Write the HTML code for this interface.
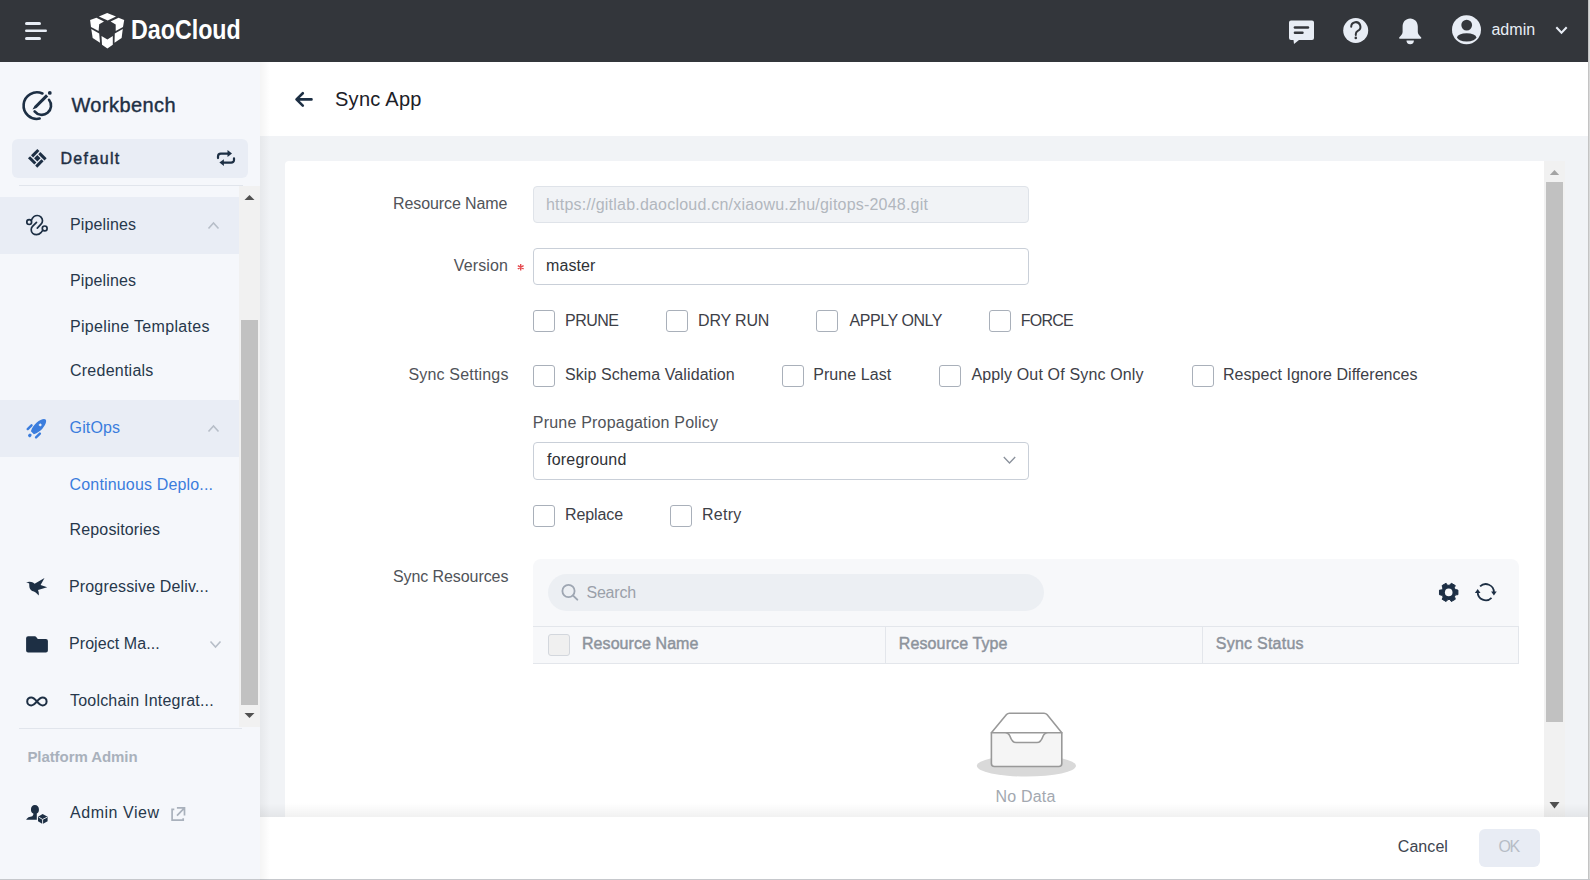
<!DOCTYPE html>
<html><head><meta charset="utf-8">
<style>
*{margin:0;padding:0;box-sizing:border-box}
html,body{width:1590px;height:880px;overflow:hidden;background:#f1f3f6;font-family:"Liberation Sans",sans-serif}
.a{position:absolute}
.t{position:absolute;white-space:nowrap;line-height:1}
.hdr{left:0;top:0;width:1588px;height:62px;background:#33363b}
.side{left:0;top:62px;width:260px;height:818px;background:#f5f7fb}
.grp{left:0;width:239px;height:57px;background:#e9edf5}
.sep{height:1px;background:#e1e5ec}
.cb{position:absolute;width:22px;height:22px;border:1px solid #a9b0ba;border-radius:3px;background:#fff}
.ic{position:absolute;overflow:visible}
</style></head><body>
<!-- header -->
<div class="a hdr"></div>
<svg class="ic" style="left:0;top:0" width="60" height="62">
 <rect x="25" y="22" width="16" height="3" rx="1.5" fill="#e8edf5"/>
 <rect x="25" y="29.5" width="22" height="2.4" rx="1.2" fill="#e8edf5"/>
 <rect x="25" y="37" width="16" height="3" rx="1.5" fill="#e8edf5"/>
</svg>
<svg class="ic" style="left:85px;top:5px" width="50" height="50" viewBox="0 0 50 50">
 <g fill="#ffffff">
 <polygon points="13.9,11.6 22.2,8 31,11.6 22.7,15.6"/>
 <polygon points="5.1,15.1 11.4,12.8 19,16.5 14.2,19.3 13.6,25.9 6,21.9"/>
 <polygon points="25.6,16.5 33.5,12.8 39.2,15.1 38,21.9 30.7,25.9 30.7,19.6"/>
 <polygon points="6.25,24.1 14.2,28.4 15,37.8 7.7,33"/>
 <polygon points="37.8,24.1 29.8,28.4 29.5,37.8 36.6,33"/>
 <polygon points="16.5,31 22.4,34.4 27.8,31 27.8,39.8 22.4,43.5 17,39.8"/>
 </g>
</svg>
<!-- header right icons -->
<svg class="ic" style="left:1280px;top:10px" width="160" height="40" viewBox="0 0 160 40">
 <path d="M11,10.4 H32 a2,2 0 0 1 2,2 V28 a2,2 0 0 1 -2,2 H19 L14,34 L13.5,30 H11 a2,2 0 0 1 -2,-2 V12.4 a2,2 0 0 1 2,-2z" fill="#e8edf5"/>
 <rect x="13.7" y="16.3" width="15.5" height="2.4" rx="1.2" fill="#33363b"/>
 <rect x="13.7" y="21.6" width="10" height="2.4" rx="1.2" fill="#33363b"/>
 <circle cx="75.7" cy="20.5" r="12.5" fill="#e8edf5"/>
 <path d="M71.2,16.8 a4.6,4.6 0 1 1 6.6,4.1 c-1.4,0.8 -2,1.6 -2,3.2 v0.8" stroke="#33363b" stroke-width="2" fill="none" stroke-linecap="round"/>
 <circle cx="75.8" cy="27.9" r="1.3" fill="#33363b"/>
 <path d="M130.2,8.5 c-4.6,0 -7.6,3.6 -7.6,8.2 v5 c0,2 -1.2,3.4 -3.2,5.6 c-0.6,0.6 -0.4,1.5 0.6,1.5 h20.4 c1,0 1.2,-0.9 0.6,-1.5 c-2,-2.2 -3.2,-3.6 -3.2,-5.6 v-5 c0,-4.6 -3,-8.2 -7.6,-8.2z" fill="#e8edf5"/>
 <path d="M126.5,30.5 h7.4 a3.7,3.7 0 0 1 -7.4,0z" fill="#e8edf5"/>
</svg>
<svg class="ic" style="left:1445px;top:10px" width="130" height="40" viewBox="0 0 130 40">
 <circle cx="21.5" cy="19.7" r="14.5" fill="#e8edf5"/>
 <circle cx="21.7" cy="15.1" r="5.4" fill="#33363b"/>
 <ellipse cx="21.7" cy="27.3" rx="9.6" ry="4.1" fill="#33363b"/>
 <path d="M111.3,17.3 L116.5,22.8 L121.7,17.3" stroke="#e8edf5" stroke-width="2" fill="none"/>
</svg>

<!-- sidebar -->
<div class="a side"></div>
<svg class="ic" style="left:18px;top:86px" width="40" height="40" viewBox="0 0 40 40">
 <path d="M24.45,7.5 A13.3,13.3 0 1 0 21.66,32.6" stroke="#1d2f44" stroke-width="2.6" fill="none" stroke-linecap="round"/>
 <path d="M31,13.8 A9,9 0 0 1 16.6,25.4" stroke="#1d2f44" stroke-width="2.6" fill="none" stroke-linecap="round"/>
 <polygon points="14.5,23.6 16.4,19.9 28.0,8.3 30.2,10.5 18.6,22.1" fill="#1d2f44"/>
 <circle cx="31.8" cy="6.9" r="1.9" fill="#1d2f44"/>
</svg>
<div class="a" style="left:12px;top:139px;width:236px;height:38.5px;border-radius:6px;background:#e9edf5"></div>
<svg class="ic" style="left:22px;top:143px" width="30" height="30" viewBox="0 0 30 30">
 <g transform="translate(15.3,15.3) scale(-1,1) rotate(45) translate(-6.6,-6.6)" fill="#1d2f44">
  <rect x="0" y="0" width="8.9" height="3"/>
  <rect x="10.2" y="0" width="3" height="8.9"/>
  <rect x="4.3" y="10.2" width="8.9" height="3"/>
  <rect x="0" y="4.3" width="3" height="8.9"/>
  <rect x="4.3" y="4.3" width="4.6" height="4.6"/>
 </g>
</svg>
<svg class="ic" style="left:205px;top:140px" width="50" height="35" viewBox="0 0 50 35">
 <path d="M13,18.1 V16.5 a2.8,2.8 0 0 1 2.8,-2.8 H23" stroke="#1d2f44" stroke-width="2.2" fill="none" stroke-linecap="round"/>
 <polygon points="22.5,10.1 27,13.6 22.5,17" fill="#1d2f44"/>
 <path d="M29,18.3 V19.9 a2.8,2.8 0 0 1 -2.8,2.8 H18.7" stroke="#1d2f44" stroke-width="2.2" fill="none" stroke-linecap="round"/>
 <polygon points="18.9,19.3 14.4,22.6 18.9,25.9" fill="#1d2f44"/>
</svg>
<div class="a sep" style="left:19px;top:185px;width:224px"></div>
<!-- sidebar scroll track -->
<div class="a" style="left:239px;top:186px;width:21px;height:541px;background:#f1f1f1"></div>
<div class="a" style="left:241px;top:320px;width:17px;height:385px;background:#c1c1c1"></div>
<svg class="ic" style="left:239px;top:186px" width="21" height="541">
 <polygon points="5.5,14 10.5,9 15.5,14" fill="#505050"/>
 <polygon points="5.5,527 10.5,532 15.5,527" fill="#505050"/>
</svg>
<div class="a grp" style="top:197px"></div>
<div class="a grp" style="top:400px"></div>
<!-- pipelines icon -->
<svg class="ic" style="left:22px;top:210px" width="30" height="30" viewBox="0 0 30 30">
 <g stroke="#1d2f44" stroke-width="1.7" fill="none" stroke-linecap="round">
 <circle cx="7.2" cy="12.1" r="2.4"/>
 <circle cx="22.7" cy="18.4" r="2.4"/>
 <path d="M9.3,10.3 C10.5,7.5 12.5,5.5 15.3,5.5 C18.3,5.5 20.5,8 20.5,10.8 C20.5,12.2 20,13.2 19,14.2 L15.3,18.2"/>
 <path d="M14.5,12.4 L10.5,16.4 C9.6,17.3 9.2,18.6 9.2,19.8 C9.2,22.6 11.6,24.6 14.6,24.6 C16.4,24.6 18,23.6 19.2,22.3 L20.9,20.3"/>
 </g>
</svg>
<svg class="ic" style="left:200px;top:215px" width="30" height="20">
 <path d="M8.5,13.5 L13.5,8 L18.5,13.5" stroke="#b7bec8" stroke-width="1.6" fill="none"/>
</svg>
<!-- rocket -->
<svg class="ic" style="left:22px;top:413px" width="30" height="30" viewBox="0 0 30 30">
 <g transform="translate(16.95,13.2) rotate(45)" fill="#3b7ddd">
  <path d="M-2.1,9.3 L2.1,9.3 C3.8,6 4.3,2 4.1,-1 C3.8,-5.5 2,-9.4 0,-9.4 C-2,-9.4 -3.8,-5.5 -4.1,-1 C-4.3,2 -3.8,6 -2.1,9.3z"/>
  <rect x="-7.1" y="3.4" width="2.4" height="7.8" rx="1.2"/>
  <rect x="4.7" y="3.4" width="2.4" height="7.8" rx="1.2"/>
  <rect x="-1.6" y="11.1" width="3.2" height="3.6" rx="1.5"/>
  <rect x="-1.2" y="-3" width="2.4" height="2.4" fill="#e9edf5"/>
 </g>
</svg>
<svg class="ic" style="left:200px;top:418px" width="30" height="20">
 <path d="M8.5,13.5 L13.5,8 L18.5,13.5" stroke="#b7bec8" stroke-width="1.6" fill="none"/>
</svg>
<!-- bird -->
<svg class="ic" style="left:22px;top:572px" width="30" height="30" viewBox="0 0 30 30">
 <path d="M4.1,10.2 C6,9.6 9,9.3 11,10.5 L12.6,11.8 L22.5,6.1 L18.6,13.1 L25.2,15.3 L16,18.1 C16.8,20 17,22 16.7,23.5 C15,21 12.5,19.5 10.2,18.9 C8.2,17.8 7.3,16 7.3,14 C7.3,12.8 7.2,12 7.2,11.5 C6.3,11 5.2,10.6 4.1,10.2z" fill="#1d2f44"/>
</svg>
<!-- folder -->
<svg class="ic" style="left:22px;top:629px" width="30" height="30" viewBox="0 0 30 30">
 <path d="M6.1,7.2 h6.8 c0.6,0 1,0.3 1.3,0.7 l1.6,2.2 h8.1 a2,2 0 0 1 2,2 v9.4 a2,2 0 0 1 -2,2 h-17.8 a2,2 0 0 1 -2,-2 v-12.3 a2,2 0 0 1 2,-2z" fill="#1d2f44"/>
</svg>
<svg class="ic" style="left:200px;top:634px" width="30" height="20">
 <path d="M10.5,7.5 L15.5,13 L20.5,7.5" stroke="#b7bec8" stroke-width="1.6" fill="none"/>
</svg>
<!-- infinity -->
<svg class="ic" style="left:20px;top:690px" width="35" height="25" viewBox="0 0 35 25">
 <path d="M16.9,11.4 c-2,-2.5 -3.5,-4 -5.7,-4 a4,4 0 0 0 0,8 c2.2,0 3.7,-1.5 5.7,-4 c2,-2.5 3.5,-4 5.7,-4 a4,4 0 0 1 0,8 c-2.2,0 -3.7,-1.5 -5.7,-4z" stroke="#1d2f44" stroke-width="2.0" fill="none"/>
</svg>
<div class="a sep" style="left:19px;top:728px;width:223px"></div>
<!-- admin view icon -->
<svg class="ic" style="left:22px;top:800px" width="30" height="30" viewBox="0 0 30 30">
 <path d="M12.9,5.1 C15.3,5.1 16.9,7 16.9,9 V10.3 C16.9,11.7 16.1,12.8 14.8,13.6 V19.8 H4.1 C5,17.8 7.5,16.6 10.3,16.3 L11.3,14.8 V13.6 C9.8,12.8 9,11.7 9,10.3 V9 C9,7 10.5,5.1 12.9,5.1z" fill="#1d2f44"/>
 <polygon points="20.6,14 25.6,16.8 25.6,21.3 20.6,23.9 16,21.3 16,16.8" fill="#1d2f44"/>
 <path d="M16.7,17.2 L20.6,19.4 L25.2,17.2 M20.6,19.4 V24" stroke="#f5f7fb" stroke-width="0.9" fill="none"/>
</svg>
<svg class="ic" style="left:165px;top:800px" width="30" height="30" viewBox="0 0 30 30">
 <path d="M9.3,9.4 H7.1 V20.2 H18.2 V18.3" stroke="#a9b1bc" stroke-width="1.7" fill="none"/>
 <path d="M12,15.6 L19.5,7.9 M11.9,7.9 H19.5 V15.4" stroke="#a9b1bc" stroke-width="1.7" fill="none"/>
</svg>

<!-- main -->
<div class="a" style="left:260px;top:62px;width:1328px;height:74px;background:#fff"></div>
<svg class="ic" style="left:290px;top:87px" width="25" height="25" viewBox="0 0 25 25">
 <path d="M21.5,12.4 H7 M12.8,6.2 L6.5,12.4 L12.8,18.6" stroke="#1d2f44" stroke-width="2.6" fill="none" stroke-linecap="round" stroke-linejoin="round"/>
</svg>
<!-- card -->
<div class="a" style="left:285px;top:161px;width:1259px;height:719px;background:#fff;border-radius:4px 0 0 0"></div>
<div class="a" style="left:1544px;top:161px;width:21px;height:656px;background:#f1f1f1"></div>
<div class="a" style="left:1546px;top:182px;width:17px;height:540px;background:#c1c1c1"></div>
<svg class="ic" style="left:1544px;top:161px" width="21" height="656">
 <polygon points="5.8,14 10.5,9 15.2,14" fill="#a3a3a3"/>
 <polygon points="5.5,641 10.5,647.5 15.5,641" fill="#505050"/>
</svg>
<!-- inputs -->
<div class="a" style="left:533px;top:186px;width:496px;height:37px;background:#f1f3f6;border:1px solid #dfe3e9;border-radius:4px"></div>
<div class="a" style="left:533px;top:248px;width:496px;height:37px;background:#fff;border:1px solid #c9cfd8;border-radius:4px"></div>
<svg class="ic" style="left:510px;top:256.5px" width="20" height="20" viewBox="0 0 20 20">
 <path d="M10.7,7 v6.6 M7.8,8.65 l5.8,3.3 M13.6,8.65 l-5.8,3.3" stroke="#e5484d" stroke-width="1.35"/>
</svg>
<div class="cb" style="left:533px;top:310px"></div>
<div class="cb" style="left:666px;top:310px"></div>
<div class="cb" style="left:816px;top:310px"></div>
<div class="cb" style="left:989px;top:310px"></div>
<div class="cb" style="left:533px;top:364.5px"></div>
<div class="cb" style="left:782px;top:364.5px"></div>
<div class="cb" style="left:939px;top:364.5px"></div>
<div class="cb" style="left:1192px;top:364.5px"></div>
<div class="a" style="left:533px;top:442px;width:496px;height:37.5px;background:#fff;border:1px solid #c9cfd8;border-radius:4px"></div>
<svg class="ic" style="left:995px;top:450px" width="30" height="20">
 <path d="M8.8,7 L14.5,13 L20.2,7" stroke="#8a919c" stroke-width="1.3" fill="none"/>
</svg>
<div class="cb" style="left:533px;top:504.5px"></div>
<div class="cb" style="left:670px;top:504.5px"></div>
<!-- resources box -->
<div class="a" style="left:533px;top:559px;width:986px;height:104px;background:#f7f8fa;border-radius:8px 8px 0 0"></div>
<div class="a" style="left:548px;top:573.5px;width:496px;height:37px;background:#eceff3;border-radius:19px"></div>
<svg class="ic" style="left:555px;top:577px" width="30" height="30" viewBox="0 0 30 30">
 <circle cx="13.5" cy="14" r="6.1" stroke="#9ea6b2" stroke-width="1.8" fill="none"/>
 <path d="M18.1,18.6 L22.3,22.6" stroke="#9ea6b2" stroke-width="2" stroke-linecap="round"/>
</svg>
<svg class="ic" style="left:1430px;top:575px" width="80" height="35" viewBox="0 0 80 35">
 <path d="M24.22,12.77 L25.28,14.47 L27.92,15.10 L27.92,19.70 L25.47,19.86 L24.52,21.63 L25.30,24.23 L21.32,26.53 L19.95,24.49 L17.95,24.56 L16.08,26.53 L12.10,24.23 L13.18,22.03 L12.12,20.33 L9.48,19.70 L9.48,15.10 L11.93,14.94 L12.88,13.17 L12.10,10.57 L16.08,8.27 L17.45,10.31 L19.45,10.24 L21.32,8.27 L25.30,10.57z" fill="#1d2f44" stroke="#1d2f44" stroke-width="1" stroke-linejoin="round"/>
 <circle cx="18.7" cy="17.4" r="3.8" fill="#f7f8fa"/>
 <g stroke="#1d2f44" stroke-width="1.8" fill="none">
  <path d="M50.07,11.47 A8.1,8.1 0 0 1 63.9,17.2"/>
  <path d="M47.7,17.2 A8.1,8.1 0 0 0 61.53,22.93"/>
 </g>
 <polygon points="47.7,13.9 44.9,17.9 50.5,17.9" fill="#1d2f44"/>
 <polygon points="63.9,20.5 61.1,16.5 66.7,16.5" fill="#1d2f44"/>
</svg>
<!-- table header -->
<div class="a" style="left:533px;top:626px;width:986px;height:38px;background:#f7f8fa;border:1px solid #e3e6eb;border-left:none"></div>
<div class="a" style="left:885px;top:626px;width:1px;height:38px;background:#e3e6eb"></div>
<div class="a" style="left:1202px;top:626px;width:1px;height:38px;background:#e3e6eb"></div>
<div class="a" style="left:548px;top:634px;width:22px;height:22px;background:#f0f0f0;border:1px solid #d3d7dd;border-radius:3px"></div>
<!-- empty -->
<svg class="ic" style="left:970px;top:700px" width="115" height="85" viewBox="0 0 115 85">
 <ellipse cx="56.4" cy="65.8" rx="49.6" ry="10.8" fill="#d9d9d9"/>
 <path d="M21.4,32.7 L36.5,14.6 a4,4 0 0 1 3,-1.4 H74 a4,4 0 0 1 3,1.4 L91.8,32.7z" fill="#fff" stroke="#999" stroke-width="1.6" stroke-linejoin="round"/>
 <path d="M21.4,32.7 H35 c3,0 4,1 5,3.5 c1,3 2.5,6.3 6,6.3 h21 c3.5,0 5,-3.3 6,-6.3 c1,-2.5 2,-3.5 5,-3.5 H91.8 V63.5 a3,3 0 0 1 -3,3 H24.4 a3,3 0 0 1 -3,-3z" fill="#f5f5f5" stroke="#999" stroke-width="1.6" stroke-linejoin="round"/>
</svg>
<!-- footer -->
<div class="a" style="left:260px;top:803px;width:1328px;height:14px;background:linear-gradient(180deg,rgba(0,0,0,0),rgba(0,0,0,0.055))"></div>
<div class="a" style="left:260px;top:817px;width:1328px;height:63px;background:#fff"></div>
<div class="a" style="left:1479px;top:829px;width:61px;height:37.5px;background:#e8ecf4;border-radius:6px"></div>
<div class="a" style="left:1588px;top:0;width:2px;height:880px;background:linear-gradient(90deg,#b9b9b9,#e4e4e4)"></div>
<div class="a" style="left:0;top:879px;width:1590px;height:1px;background:#c6c8cc"></div>
<div class="a" style="left:260px;top:62px;width:10px;height:818px;background:linear-gradient(90deg,rgba(0,0,0,0.045),rgba(0,0,0,0))"></div>
<div class="t" id="t_logo" style="left:131.00px;top:17.00px;font-size:27px;font-weight:700;color:#ffffff;transform:scaleX(0.8608);transform-origin:0 0;">DaoCloud</div>
<div class="t" id="t_admin" style="left:1491.40px;top:22.01px;font-size:16px;font-weight:400;color:#e8edf5;letter-spacing:0.050px;">admin</div>
<div class="t" id="t_wb" style="left:71.40px;top:95.01px;font-size:20px;font-weight:400;color:#1d2f44;letter-spacing:0.431px;-webkit-text-stroke:0.4px #1d2f44">Workbench</div>
<div class="t" id="t_def" style="left:60.40px;top:151.00px;font-size:16px;font-weight:400;color:#1d2f44;letter-spacing:1.367px;-webkit-text-stroke:0.45px #1d2f44">Default</div>
<div class="t" id="t_pip" style="left:70.00px;top:217.00px;font-size:16px;font-weight:400;color:#27384b;letter-spacing:0.125px;">Pipelines</div>
<div class="t" id="t_pip2" style="left:70.00px;top:273.00px;font-size:16px;font-weight:400;color:#27384b;letter-spacing:0.125px;">Pipelines</div>
<div class="t" id="t_pipt" style="left:70.00px;top:319.00px;font-size:16px;font-weight:400;color:#27384b;letter-spacing:0.324px;">Pipeline Templates</div>
<div class="t" id="t_cred" style="left:70.00px;top:363.01px;font-size:16px;font-weight:400;color:#27384b;letter-spacing:0.240px;">Credentials</div>
<div class="t" id="t_git" style="left:69.60px;top:420.00px;font-size:16px;font-weight:400;color:#3b7ddd;letter-spacing:0.140px;">GitOps</div>
<div class="t" id="t_cd" style="left:69.60px;top:477.01px;font-size:16px;font-weight:400;color:#3b7ddd;letter-spacing:0.156px;">Continuous Deplo...</div>
<div class="t" id="t_repo" style="left:69.60px;top:522.00px;font-size:16px;font-weight:400;color:#27384b;letter-spacing:0.136px;">Repositories</div>
<div class="t" id="t_prog" style="left:69.00px;top:579.00px;font-size:16px;font-weight:400;color:#27384b;letter-spacing:0.158px;">Progressive Deliv...</div>
<div class="t" id="t_proj" style="left:69.00px;top:636.00px;font-size:16px;font-weight:400;color:#27384b;letter-spacing:0.075px;">Project Ma...</div>
<div class="t" id="t_tool" style="left:70.00px;top:693.01px;font-size:16px;font-weight:400;color:#27384b;letter-spacing:0.200px;">Toolchain Integrat...</div>
<div class="t" id="t_pa" style="left:27.40px;top:749.01px;font-size:15px;font-weight:700;color:#a9b1bc;letter-spacing:-0.069px;">Platform Admin</div>
<div class="t" id="t_av" style="left:70.00px;top:805.00px;font-size:16px;font-weight:400;color:#27384b;letter-spacing:0.533px;">Admin View</div>
<div class="t" id="t_sync" style="left:335.00px;top:89.01px;font-size:20px;font-weight:400;color:#1c2027;letter-spacing:0.271px;">Sync App</div>
<div class="t" id="t_rn" style="left:393.00px;top:196.00px;font-size:16px;font-weight:400;color:#505359;letter-spacing:-0.100px;">Resource Name</div>
<div class="t" id="t_url" style="left:546.00px;top:197.01px;font-size:16px;font-weight:400;color:#b2b7be;letter-spacing:0.212px;">https://gitlab.daocloud.cn/xiaowu.zhu/gitops-2048.git</div>
<div class="t" id="t_ver" style="left:453.80px;top:258.01px;font-size:16px;font-weight:400;color:#505359;letter-spacing:0.117px;">Version</div>
<div class="t" id="t_master" style="left:546.00px;top:258.01px;font-size:16px;font-weight:400;color:#2f3237;letter-spacing:0.080px;">master</div>
<div class="t" id="t_prune" style="left:565.00px;top:313.00px;font-size:16px;font-weight:400;color:#3d4047;letter-spacing:-0.500px;">PRUNE</div>
<div class="t" id="t_dry" style="left:698.00px;top:313.00px;font-size:16px;font-weight:400;color:#3d4047;letter-spacing:-0.150px;">DRY RUN</div>
<div class="t" id="t_apply" style="left:849.40px;top:313.00px;font-size:16px;font-weight:400;color:#3d4047;letter-spacing:-0.422px;">APPLY ONLY</div>
<div class="t" id="t_force" style="left:1020.80px;top:313.00px;font-size:16px;font-weight:400;color:#3d4047;letter-spacing:-0.775px;">FORCE</div>
<div class="t" id="t_ss" style="left:408.40px;top:367.01px;font-size:16px;font-weight:400;color:#505359;letter-spacing:0.183px;">Sync Settings</div>
<div class="t" id="t_skip" style="left:565.00px;top:367.00px;font-size:16px;font-weight:400;color:#3d4047;letter-spacing:0.090px;">Skip Schema Validation</div>
<div class="t" id="t_pl" style="left:813.20px;top:367.00px;font-size:16px;font-weight:400;color:#3d4047;letter-spacing:0.067px;">Prune Last</div>
<div class="t" id="t_aoos" style="left:971.40px;top:367.00px;font-size:16px;font-weight:400;color:#3d4047;letter-spacing:0.152px;">Apply Out Of Sync Only</div>
<div class="t" id="t_rid" style="left:1223.00px;top:367.00px;font-size:16px;font-weight:400;color:#3d4047;letter-spacing:0.036px;">Respect Ignore Differences</div>
<div class="t" id="t_ppp" style="left:532.80px;top:415.00px;font-size:16px;font-weight:400;color:#505359;letter-spacing:0.204px;">Prune Propagation Policy</div>
<div class="t" id="t_fg" style="left:547.00px;top:452.01px;font-size:16px;font-weight:400;color:#2f3237;letter-spacing:0.222px;">foreground</div>
<div class="t" id="t_rep" style="left:565.00px;top:507.00px;font-size:16px;font-weight:400;color:#3d4047;letter-spacing:-0.100px;">Replace</div>
<div class="t" id="t_retry" style="left:702.00px;top:507.00px;font-size:16px;font-weight:400;color:#3d4047;letter-spacing:0.250px;">Retry</div>
<div class="t" id="t_sr" style="left:393.00px;top:569.01px;font-size:16px;font-weight:400;color:#505359;letter-spacing:-0.085px;">Sync Resources</div>
<div class="t" id="t_search" style="left:586.40px;top:585.01px;font-size:16px;font-weight:400;color:#9aa0a9;letter-spacing:-0.180px;">Search</div>
<div class="t" id="t_h1" style="left:582.00px;top:636.00px;font-size:16px;font-weight:400;color:#8d939c;letter-spacing:0.067px;-webkit-text-stroke:0.45px #8d939c">Resource Name</div>
<div class="t" id="t_h2" style="left:898.80px;top:636.00px;font-size:16px;font-weight:400;color:#8d939c;letter-spacing:0.117px;-webkit-text-stroke:0.45px #8d939c">Resource Type</div>
<div class="t" id="t_h3" style="left:1215.80px;top:636.00px;font-size:16px;font-weight:400;color:#8d939c;letter-spacing:0.240px;-webkit-text-stroke:0.45px #8d939c">Sync Status</div>
<div class="t" id="t_nd" style="left:995.40px;top:789.00px;font-size:16px;font-weight:400;color:#a3a8b0;letter-spacing:0.217px;">No Data</div>
<div class="t" id="t_cancel" style="left:1397.80px;top:839.00px;font-size:16px;font-weight:400;color:#3e4550;letter-spacing:0.060px;">Cancel</div>
<div class="t" id="t_ok" style="left:1498.60px;top:839.00px;font-size:16px;font-weight:400;color:#b7bdc6;letter-spacing:-1.500px;">OK</div>
</body></html>
